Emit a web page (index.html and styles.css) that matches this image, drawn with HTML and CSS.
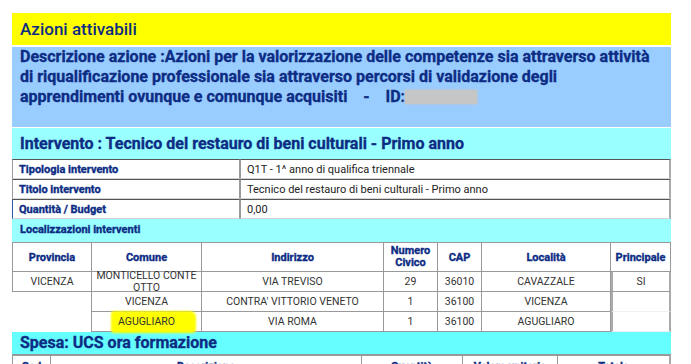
FILE: index.html
```html
<!DOCTYPE html>
<html lang="it">
<head>
<meta charset="utf-8">
<title>Azioni attivabili</title>
<link rel="stylesheet" href="styles.css">
</head>
<body>
<div class="page">
  <div class="bar bar-yellow">Azioni attivabili</div>
  <div class="desc">Descrizione azione :Azioni per la valorizzazione delle competenze sia attraverso attività di riqualificazione professionale sia attraverso percorsi di validazione degli apprendimenti ovunque e comunque acquisiti &nbsp;&nbsp;&nbsp;- &nbsp;&nbsp;&nbsp;ID:<span class="redact"></span></div>
  <div class="bar bar-cyan">Intervento : Tecnico del restauro di beni culturali - Primo anno</div>
  <table class="info">
    <tr><td class="lbl">Tipologia intervento</td><td class="val">Q1T - 1^ anno di qualifica triennale</td></tr>
    <tr><td class="lbl">Titolo intervento</td><td class="val">Tecnico del restauro di beni culturali - Primo anno</td></tr>
    <tr><td class="lbl lbl-last">Quantità / Budget</td><td class="val">0,00</td></tr>
  </table>
  <div class="subbar">Localizzazioni interventi</div>
  <table class="loc">
    <colgroup>
      <col class="c-prov"><col class="c-com"><col class="c-ind"><col class="c-num"><col class="c-cap"><col class="c-loc"><col class="c-pri">
    </colgroup>
    <tr class="head">
      <th>Provincia</th><th>Comune</th><th>Indirizzo</th><th class="two">Numero<br>Civico</th><th>CAP</th><th>Località</th><th>Principale</th>
    </tr>
    <tr>
      <td>VICENZA</td><td class="wrap"><div class="wrap-in">MONTICELLO CONTE OTTO</div></td><td>VIA TREVISO</td><td>29</td><td>36010</td><td>CAVAZZALE</td><td class="princ">SI</td>
    </tr>
    <tr>
      <td class="blank"></td><td>VICENZA</td><td>CONTRA' VITTORIO VENETO</td><td>1</td><td>36100</td><td>VICENZA</td><td class="princ faint"></td>
    </tr>
    <tr>
      <td class="blank"></td><td><span class="hl">AGUGLIARO</span></td><td>VIA ROMA</td><td>1</td><td>36100</td><td>AGUGLIARO</td><td class="princ faint"></td>
    </tr>
  </table>
  <div class="bar bar-spesa">Spesa: UCS ora formazione</div>
  <table class="spesa">
    <colgroup>
      <col class="s-cod"><col class="s-desc"><col class="s-qta"><col class="s-val"><col class="s-tot">
    </colgroup>
    <tr><th>Cod</th><th>Descrizione</th><th>Quantità</th><th>Valore unitario</th><th>Totale</th></tr>
  </table>
</div>
</body>
</html>
```

FILE: styles.css
```css
html, body {
  margin: 0;
  padding: 0;
  background: #ffffff;
  height: 364px;
  overflow: hidden;
}
.page {
  margin: 13px 0 0 12px;
  width: 659px;
  font-family: Roboto, "Liberation Sans", sans-serif;
  color: #0d2c84;
}
.bar {
  padding-left: 8px;
  font-size: 16px;
  font-weight: 700;
  -webkit-text-stroke: 0.35px #0d2c84;
}
.bar-yellow {
  background: #ffff00;
  height: 32px;
  line-height: 32px;
  font-weight: 500;
  font-size: 17px;
  margin-bottom: 2px;
  -webkit-text-stroke: 0;
}
.desc {
  background: #99ccff;
  height: 80px;
  box-sizing: border-box;
  padding: 0 13px 0 8px;
  font-size: 16px;
  font-weight: 700;
  -webkit-text-stroke: 0.35px #0d2c84;
  line-height: 20px;
  margin-bottom: 1px;
}
.redact {
  display: inline-block;
  width: 72px;
  height: 14px;
  vertical-align: -2px;
  background: #c6c6c6;
  box-shadow: 0 0 3px #c6c6c6;
  -webkit-text-stroke: 0;
}
.bar-cyan {
  background: #99ffff;
  height: 31px;
  line-height: 32px;
}
table {
  border-spacing: 0;
  width: 659px;
  table-layout: fixed;
  font-size: 11px;
}
.c-prov { width: 80px; }
.c-com { width: 110px; }
.c-ind { width: 182px; }
.c-num { width: 54px; }
.c-cap { width: 44px; }
.c-loc { width: 129px; }
.c-pri { width: 60px; }
.s-cod { width: 39px; }
.s-desc { width: 311px; }
.s-qta { width: 101px; }
.s-val { width: 95px; }
.s-tot { width: 113px; }
.info td {
  height: 18px;
  padding: 0 0 0 6px;
  border-top: 1px solid #555;
  border-bottom: 1px solid #d4d4d4;
  border-left: 1px solid #9a9a9a;
  border-right: 1px solid #9a9a9a;
}
.info .lbl {
  width: 220px;
  font-weight: 700;
  -webkit-text-stroke: 0.35px #0d2c84;
  color: #0d2c84;
}
.info .lbl-last {
  border-left-color: #3456a6;
}
.info .val {
  color: #222;
  border-right: 2px solid #aaa;
}
.subbar {
  background: #99ffff;
  height: 23px;
  line-height: 22px;
  padding-left: 8px;
  font-size: 11px;
  font-weight: 700;
  -webkit-text-stroke: 0.35px #0d2c84;
}
.loc th, .loc td {
  border-right: 1px solid #999;
  border-bottom: 1px solid #999;
  text-align: center;
  padding: 0;
}
.loc tr > :first-child {
  border-left: 1px solid #999;
}
.loc th {
  height: 28px;
  border-top: 1px solid #999;
  font-weight: 700;
  -webkit-text-stroke: 0.35px #0d2c84;
  color: #0d2c84;
  font-size: 11px;
}
.loc th.two {
  line-height: 12px;
}
.loc td {
  height: 19px;
  color: #333;
  font-size: 10.5px;
  line-height: 12px;
}
.loc td.wrap {
  padding: 0 2px;
}
.wrap-in {
  height: 19px;
  line-height: 11.5px;
  margin-top: -2px;
  margin-bottom: 2px;
}
.loc td.blank,
.loc tr > td.blank:first-child {
  border-left: none;
  border-right: 1px solid #999;
  border-bottom: none;
}
.loc td.princ {
  border-right: 2px solid #aaa;
  border-left: 2px solid #aaa;
}
.loc td.faint {
  border-bottom: 1px solid #f0f0f0;
}
.hl {
  position: relative;
  z-index: 0;
}
.hl::before {
  content: "";
  position: absolute;
  left: -7px;
  right: -21px;
  top: -4px;
  bottom: -5px;
  background: #ffff00;
  border-radius: 3px 6px 4px 3px;
  filter: blur(1px);
  z-index: -1;
}
.bar-spesa {
  background: #66ffff;
  height: 22px;
  line-height: 22px;
  border-bottom: 1px solid #999;
}
.spesa th {
  height: 20px;
  border-right: 1px solid #999;
  border-top: 1px solid #999;
  padding-top: 4px;
  vertical-align: top;
  font-weight: 700;
  -webkit-text-stroke: 0.35px #0d2c84;
  font-size: 11px;
}
.spesa th:first-child {
  border-left: 1px solid #999;
}
.spesa th:last-child {
  border-right: 2px solid #aaa;
}
```
